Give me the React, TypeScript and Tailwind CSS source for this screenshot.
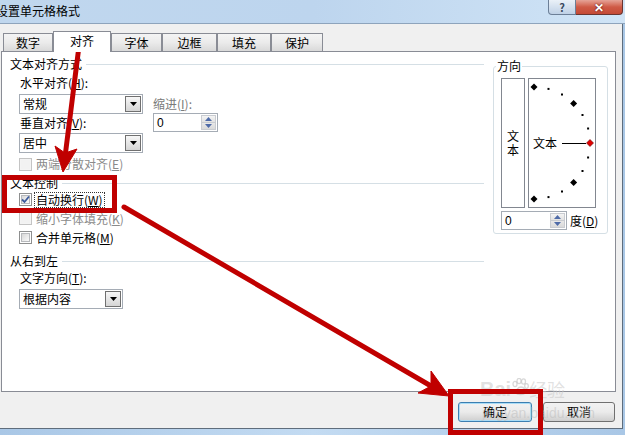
import React from "react";

const TABS = [
  { label: "数字", w: "w-[50px]", active: false },
  { label: "对齐", w: "w-[58px]", active: true },
  { label: "字体", w: "w-[51px]", active: false },
  { label: "边框", w: "w-[55px]", active: false },
  { label: "填充", w: "w-[54px]", active: false },
  { label: "保护", w: "w-[52px]", active: false },
];

// dial marks, degrees from horizontal; every 45° is a diamond
const MARKS = [90, 75, 60, 45, 30, 15, 0, -15, -30, -45, -60, -75, -90];

function DropArrow() {
  return (
    <svg width="7" height="4" viewBox="0 0 7 4">
      <path d="M0 0h7L3.5 4z" fill="#000" />
    </svg>
  );
}

function Select({ value, w }: { value: string; w: string }) {
  return (
    <div className={`${w} h-[20px] border border-[#a5acb5] bg-white flex items-center justify-between pl-[3px] pr-px`}>
      <span className="leading-[14px]">{value}</span>
      <div className="w-[16px] h-[16px] border border-[#707070] bg-linear-to-b from-[#f7f7f7] to-[#d5d5d5] flex items-center justify-center">
        <DropArrow />
      </div>
    </div>
  );
}

function Spin({ w }: { w: string }) {
  return (
    <div className={`${w} h-[19px] border border-[#a5acb5] bg-white flex items-center justify-between pl-[3px] pr-px`}>
      <span className="leading-[14px] font-['Liberation_Sans',sans-serif] text-[12px]">0</span>
      <div className="w-[15px] h-[15px] flex flex-col border border-[#c9ccd1]">
        <div className="flex-1 bg-linear-to-b from-[#f4f4f4] to-[#e2e2e2] flex items-center justify-center border-b border-[#c9ccd1]">
          <svg width="7" height="4" viewBox="0 0 7 4">
            <path d="M0 4h7L3.5 0z" fill="#4f6ba8" />
          </svg>
        </div>
        <div className="flex-1 bg-linear-to-b from-[#e8e8e8] to-[#d9d9d9] flex items-center justify-center">
          <svg width="7" height="4" viewBox="0 0 7 4">
            <path d="M0 0h7L3.5 4z" fill="#4f6ba8" />
          </svg>
        </div>
      </div>
    </div>
  );
}

function Checkbox({ checked = false, disabled = false }: { checked?: boolean; disabled?: boolean }) {
  return (
    <div
      className={`w-[13px] h-[13px] border p-px flex ${
        disabled ? "border-[#c4c4c4] bg-[#f4f4f4]" : "border-[#8e8f8f] bg-white"
      }`}
    >
      <div
        className={`flex-1 flex items-center justify-center ${
          disabled ? "bg-[#f2f2f2]" : "bg-linear-to-br from-[#d8d8d8] to-[#fafafa] border border-[#b7b9bc]"
        }`}
      >
        {checked && (
          <svg width="9" height="9" viewBox="0 0 9 9" className="-m-px">
            <path d="M1 4.5L3.5 7L8 1.5" fill="none" stroke="#3b5a9c" strokeWidth="1.8" />
          </svg>
        )}
      </div>
    </div>
  );
}

function Heading({ text }: { text: string }) {
  return (
    <div className="h-[14px] flex items-center">
      <span className="leading-[14px]">{text}</span>
      <div className="flex-1 h-px bg-[#d5dfe5] ml-[4px]" />
    </div>
  );
}

function CheckRow({ label, checked, disabled, focus }: { label: React.ReactNode; checked?: boolean; disabled?: boolean; focus?: boolean }) {
  return (
    <div className="h-[19px] ml-[9px] flex items-center gap-[3px]">
      <Checkbox checked={checked} disabled={disabled} />
      <span
        className={`leading-[14px] px-px ${disabled ? "text-[#8a8a8a]" : ""} ${
          focus ? "outline outline-dotted outline-[#333]" : ""
        }`}
      >
        {label}
      </span>
    </div>
  );
}

function Dial() {
  return (
    <div className="relative ml-[3px] w-[68px] h-[130px] border border-[#828790] bg-white">
      <svg width="66" height="128" viewBox="0 0 66 128" className="absolute inset-0">
        {MARKS.map((deg) => {
          const r = (deg * Math.PI) / 180;
          const x = 5 + 56 * Math.cos(r);
          const y = 64 - 56 * Math.sin(r);
          if (deg % 45 === 0) {
            return (
              <path
                key={deg}
                d={`M${x} ${y - 3.5}L${x + 3.5} ${y}L${x} ${y + 3.5}L${x - 3.5} ${y}z`}
                fill={deg === 0 ? "#e00000" : "#000"}
                stroke={deg === 0 ? "#600" : "none"}
                strokeWidth="0.6"
              />
            );
          }
          return <rect key={deg} x={x - 1} y={y - 1} width="2" height="2" fill="#000" />;
        })}
        <line x1="33" y1="64.5" x2="57" y2="64.5" stroke="#000" strokeWidth="1" />
      </svg>
      <span className="absolute left-[4px] top-[57px] leading-[14px]">文本</span>
    </div>
  );
}

export default function App() {
  return (
    <div className="relative w-[625px] h-[435px] overflow-hidden bg-linear-to-r from-[#a9c7e6] via-[#c3dbf2] to-[#a9c7e6] text-[12px] text-black font-['Noto_Sans_CJK_SC','Liberation_Sans',sans-serif]">
      {/* Title bar */}
      <div className="h-[24px] flex justify-between pr-[2px] border-b border-[#8ea4bc] bg-linear-to-r from-[#c0d7ee] via-[#bdd5ee] to-[#d0e4f6]">
        <span className="ml-[-4px] mt-[4px] leading-[14px] text-[12px]">设置单元格格式</span>
        <div className="flex h-[15px]">
          <div className="w-[28px] border border-t-0 border-[#6c7f97] rounded-bl-[4px] bg-linear-to-b from-[#eaf1f8] to-[#bfd1e6] flex items-center justify-center text-[11px] font-bold text-[#3a4a5e] leading-none">
            ?
          </div>
          <div className="w-[47px] border border-t-0 border-l-0 border-[#6a3530] rounded-br-[4px] bg-linear-to-b from-[#e5a397] via-[#cf5a46] to-[#c44a36] flex items-center justify-center text-[12px] font-bold text-white leading-none [text-shadow:0_0_2px_#400]">
            ✕
          </div>
        </div>
      </div>

      {/* Client area */}
      <div className="w-[623px] h-[405px] bg-[#f0f0f0] border-r border-b border-[#5f6d7c] flex flex-col">
        {/* Tabs */}
        <div className="mt-[7px] ml-[3px] h-[20px] flex items-end">
          {TABS.map((t) =>
            t.active ? (
              <div
                key={t.label}
                className={`${t.w} h-[21px] -mb-px relative z-10 bg-white border border-b-0 border-[#898c95] flex items-center justify-center pb-[2px]`}
              >
                {t.label}
              </div>
            ) : (
              <div
                key={t.label}
                className={`${t.w} h-[18px] bg-linear-to-b from-[#f4f4f4] via-[#ebebeb] to-[#d9d9d9] border border-b-0 border-[#898c95] flex items-center justify-center`}
              >
                {t.label}
              </div>
            )
          )}
        </div>

        {/* Panel */}
        <div className="ml-px w-[615px] h-[341px] border border-[#898c95] bg-white flex">
          {/* Left column */}
          <div className="w-[482px] pl-[8px] pt-[5px] flex flex-col">
            <Heading text="文本对齐方式" />
            <div className="ml-[10px] mt-[5px] h-[14px] leading-[14px]">
              水平对齐(<u>H</u>):
            </div>
            <div className="ml-[9px] mt-[4px] flex">
              <div className="flex flex-col">
                <Select w="w-[124px]" value="常规" />
                <div className="mt-[2px] ml-px h-[14px] leading-[14px]">
                  垂直对齐(<u>V</u>):
                </div>
                <div className="mt-[3px]">
                  <Select w="w-[124px]" value="居中" />
                </div>
              </div>
              <div className="ml-[10px] flex flex-col">
                <div className="mt-[3px] h-[14px] leading-[14px] text-[#7a7a7a]">
                  缩进(<u>I</u>):
                </div>
                <div className="mt-[2px]">
                  <Spin w="w-[65px]" />
                </div>
              </div>
            </div>
            <div className="mt-[4px] h-[14px] ml-[9px] flex items-center gap-[3px]">
              <Checkbox disabled />
              <span className="leading-[14px] px-px text-[#8a8a8a]">
                两端分散对齐(<u>E</u>)
              </span>
            </div>
            <div className="mt-[5px]">
              <Heading text="文本控制" />
            </div>
            <CheckRow checked focus label={<>自动换行(<u>W</u>)</>} />
            <CheckRow disabled label={<>缩小字体填充(<u>K</u>)</>} />
            <CheckRow label={<>合并单元格(<u>M</u>)</>} />
            <div className="mt-[7px]">
              <Heading text="从右到左" />
            </div>
            <div className="ml-[10px] mt-[3px] h-[14px] leading-[14px]">
              文字方向(<u>T</u>):
            </div>
            <div className="ml-[9px] mt-[4px]">
              <Select w="w-[104px]" value="根据内容" />
            </div>
          </div>

          {/* Orientation group */}
          <div className="ml-[9px] mt-[14px] relative w-[115px] h-[168px] rounded-[3px] border border-[#d5dfe5] pl-[7px] pt-[11px]">
            <span className="absolute -top-[8px] left-[2px] bg-white px-px leading-[14px]">方向</span>
            <div className="flex">
              <div className="w-[24px] h-[130px] border border-[#828790] flex flex-col items-center justify-center leading-[14px]">
                <span>文</span>
                <span>本</span>
              </div>
              <Dial />
            </div>
            <div className="mt-[3px] flex items-center">
              <Spin w="w-[66px]" />
              <span className="ml-[3px] leading-[14px]">
                度(<u>D</u>)
              </span>
            </div>
          </div>
        </div>

        {/* Buttons */}
        <div className="mt-[10px] flex justify-end pr-[7px] gap-[11px]">
          <div className="w-[74px] h-[20px] rounded-[3px] border border-[#3c7fb1] bg-linear-to-b from-[#f2f2f2] via-[#ebebeb] to-[#cfcfcf] flex items-center justify-center shadow-[inset_0_0_0_1px_#a9dcf6]">
            确定
          </div>
          <div className="w-[72px] h-[20px] rounded-[3px] border border-[#707070] bg-linear-to-b from-[#f2f2f2] via-[#ebebeb] to-[#cfcfcf] flex items-center justify-center">
            取消
          </div>
        </div>
      </div>

      {/* Baidu watermark */}
      <div className="absolute left-[480px] top-[378px] flex items-end text-[rgba(200,200,200,0.55)] pointer-events-none">
        <span className="text-[20px] font-bold leading-[20px] font-['Liberation_Sans',sans-serif]">Bai</span>
        <svg width="18" height="18" viewBox="0 0 18 18" className="mb-[3px]">
          <g fill="none" stroke="rgba(190,190,190,0.6)" strokeWidth="1.3">
            <ellipse cx="4" cy="6" rx="2" ry="2.6" />
            <ellipse cx="8" cy="3" rx="2" ry="2.6" />
            <ellipse cx="12.5" cy="3.5" rx="2" ry="2.6" />
            <ellipse cx="15.5" cy="8" rx="1.8" ry="2.4" />
            <path d="M5 15c0-3 2-6 5-6s5 3 4 6c-1 2-8 2-9 0z" />
          </g>
        </svg>
        <span className="text-[18px] leading-[20px]">经验</span>
      </div>
      <span className="absolute left-[482px] top-[405px] text-[14px] leading-[16px] text-[rgba(190,190,190,0.55)] font-['Liberation_Sans',sans-serif] pointer-events-none">
        jingyan.baidu.com
      </span>

      {/* Annotation boxes */}
      <div className="absolute left-[2px] top-[175px] w-[115px] h-[38px] border-[5px] border-[#c00000] pointer-events-none" />
      <div className="absolute left-[448px] top-[389px] w-[95px] h-[46px] border-[5px] border-[#c00000] pointer-events-none" />

      {/* Annotation arrows */}
      <svg width="625" height="435" viewBox="0 0 625 435" className="absolute inset-0 pointer-events-none">
        <g fill="#c00000" stroke="#c00000">
          <line x1="79" y1="46" x2="65" y2="157" strokeWidth="5" />
          <path d="M63 172L55 146L65 153L77 149z" strokeWidth="1" />
          <line x1="124" y1="207" x2="431" y2="386" strokeWidth="5" strokeLinecap="round" />
          <path d="M449 396L418 393L431 386L431 371z" strokeWidth="1" />
        </g>
      </svg>
    </div>
  );
}
